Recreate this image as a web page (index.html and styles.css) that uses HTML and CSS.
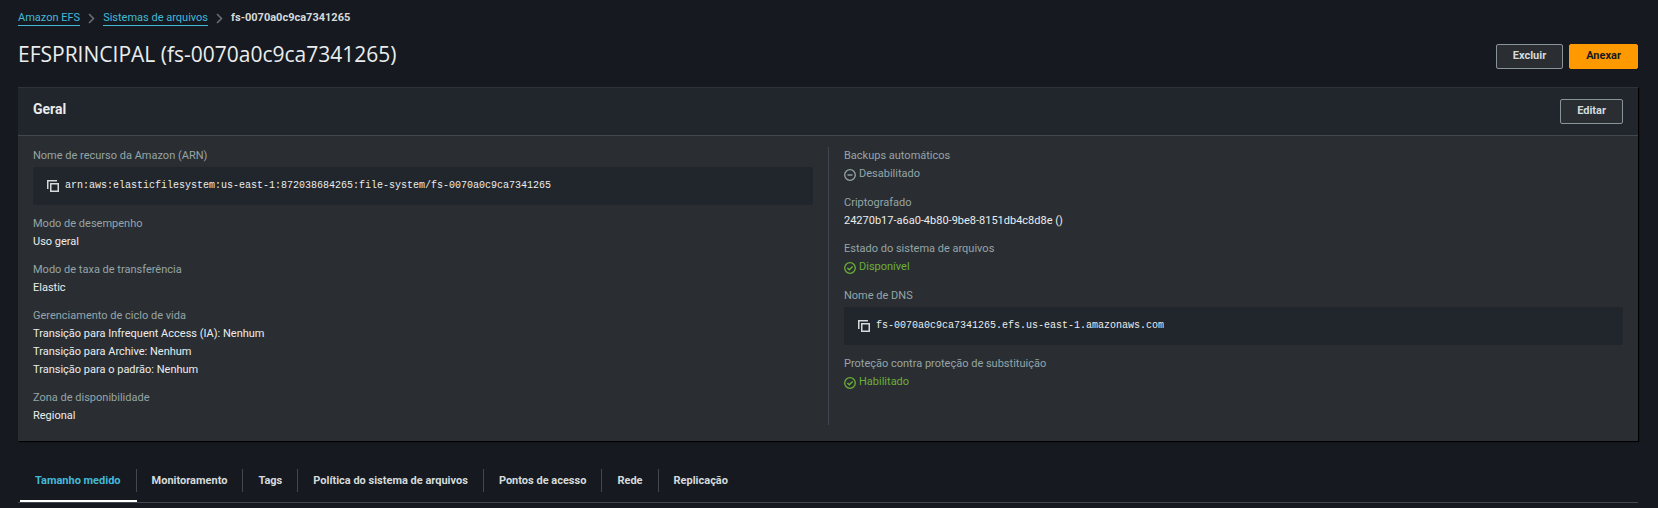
FILE: index.html
```html
<!DOCTYPE html>
<html lang="pt-BR">
<head>
<meta charset="utf-8">
<title>EFSPRINCIPAL (fs-0070a0c9ca7341265)</title>
<link rel="stylesheet" href="styles.css">
</head>
<body>
<svg class="sprite" aria-hidden="true">
  <symbol id="chevron" viewBox="0 0 7 11"><path d="M1 1l4.5 4.5L1 10" fill="none" stroke="currentColor" stroke-width="1.5"/></symbol>
  <symbol id="copy" viewBox="0 0 12 12"><path d="M.75 9V.75H10M3.75 3.75h7.5v7.5h-7.5z" fill="none" stroke="currentColor" stroke-width="1.5"/></symbol>
  <symbol id="check" viewBox="0 0 12 12"><circle cx="6" cy="6" r="5.3" fill="none" stroke="currentColor" stroke-width="1.3"/><path d="M3.4 6l1.9 1.8 3.3-3.4" fill="none" stroke="currentColor" stroke-width="1.4"/></symbol>
  <symbol id="minus" viewBox="0 0 12 12"><circle cx="6" cy="6" r="5.3" fill="none" stroke="currentColor" stroke-width="1.3"/><path d="M3.5 6h5" stroke="currentColor" stroke-width="1.4"/></symbol>
</svg>
<main class="page">
  <nav aria-label="Trilha">
    <ol class="crumbs">
      <li><a href="#efs">Amazon EFS</a></li>
      <li><svg class="chevron"><use href="#chevron"/></svg><a href="#sistemas">Sistemas de arquivos</a></li>
      <li><svg class="chevron"><use href="#chevron"/></svg><span class="current">fs-0070a0c9ca7341265</span></li>
    </ol>
  </nav>

  <header class="title-bar">
    <h1>EFSPRINCIPAL (fs-0070a0c9ca7341265)</h1>
    <div class="actions">
      <button class="btn" type="button">Excluir</button>
      <button class="btn primary" type="button">Anexar</button>
    </div>
  </header>

  <section class="panel">
    <header class="panel-head">
      <h2>Geral</h2>
      <button class="btn" type="button">Editar</button>
    </header>
    <div class="panel-body">
      <dl class="column">
        <div>
          <dt>Nome de recurso da Amazon (ARN)</dt>
          <dd class="code"><button class="copy" type="button" aria-label="Copiar ARN"><svg class="icon"><use href="#copy"/></svg></button><code>arn:aws:elasticfilesystem:us-east-1:872038684265:file-system/fs-0070a0c9ca7341265</code></dd>
        </div>
        <div><dt>Modo de desempenho</dt><dd>Uso geral</dd></div>
        <div><dt>Modo de taxa de transferência</dt><dd>Elastic</dd></div>
        <div>
          <dt>Gerenciamento de ciclo de vida</dt>
          <dd>Transição para Infrequent Access (IA): Nenhum</dd>
          <dd>Transição para Archive: Nenhum</dd>
          <dd>Transição para o padrão: Nenhum</dd>
        </div>
        <div><dt>Zona de disponibilidade</dt><dd>Regional</dd></div>
      </dl>
      <dl class="column">
        <div><dt>Backups automáticos</dt><dd class="status off"><svg class="icon"><use href="#minus"/></svg>Desabilitado</dd></div>
        <div><dt>Criptografado</dt><dd>24270b17-a6a0-4b80-9be8-8151db4c8d8e ()</dd></div>
        <div><dt>Estado do sistema de arquivos</dt><dd class="status ok"><svg class="icon"><use href="#check"/></svg>Disponível</dd></div>
        <div>
          <dt>Nome de DNS</dt>
          <dd class="code"><button class="copy" type="button" aria-label="Copiar nome de DNS"><svg class="icon"><use href="#copy"/></svg></button><code>fs-0070a0c9ca7341265.efs.us-east-1.amazonaws.com</code></dd>
        </div>
        <div><dt>Proteção contra proteção de substituição</dt><dd class="status ok"><svg class="icon"><use href="#check"/></svg>Habilitado</dd></div>
      </dl>
    </div>
  </section>

  <div class="tabs" role="tablist">
    <button class="tab" type="button" role="tab" aria-selected="true"><span>Tamanho medido</span></button>
    <button class="tab" type="button" role="tab" aria-selected="false"><span>Monitoramento</span></button>
    <button class="tab" type="button" role="tab" aria-selected="false"><span>Tags</span></button>
    <button class="tab" type="button" role="tab" aria-selected="false"><span>Política do sistema de arquivos</span></button>
    <button class="tab" type="button" role="tab" aria-selected="false"><span>Pontos de acesso</span></button>
    <button class="tab" type="button" role="tab" aria-selected="false"><span>Rede</span></button>
    <button class="tab" type="button" role="tab" aria-selected="false"><span>Replicação</span></button>
  </div>
</main>
</body>
</html>
```
FILE: styles.css
```css
* { box-sizing: border-box; }

body {
  margin: 0;
  background: #16191f;
  color: #eaeded;
  font: 11px/18px Roboto, "Noto Sans", sans-serif;
}

h1, h2, ol, dl, dt, dd { margin: 0; padding: 0; }

button { font: inherit; color: inherit; cursor: pointer; }

.sprite { display: none; }

.page { padding: 9px 20px 0 18px; }

.crumbs {
  display: flex;
  list-style: none;
}

.crumbs li { display: flex; align-items: center; }

.crumbs a {
  color: #44b9d6;
  line-height: 15px;
  text-decoration: none;
  border-bottom: 1px solid #44b9d6;
}

.chevron {
  width: 7px;
  height: 11px;
  margin: 0 8px;
  color: #687078;
}

.current { font-weight: 700; color: #d5dbdb; }

.title-bar {
  display: flex;
  justify-content: space-between;
  align-items: flex-end;
  margin-top: 12px;
}

h1 { font: 400 21px/30px "Open Sans", "Noto Sans", sans-serif; }

.actions { display: flex; gap: 6px; }

.btn {
  height: 25px;
  padding: 0 16px 2px;
  border: 1px solid #879596;
  border-radius: 2px;
  background: #2a2e33;
  color: #d5dbdb;
  font-weight: 700;
}

.btn.primary {
  border-color: #ff9900;
  background: #ff9900;
  color: #16191f;
}

.panel {
  margin-top: 18px;
  border-top: 1px solid #2f3338;
  background: #2a2e33;
  box-shadow: 1px 1px 1px #000000;
}

.panel-head {
  display: flex;
  justify-content: space-between;
  align-items: flex-start;
  padding: 11px 15px;
  border-bottom: 1px solid #414750;
  background: #21252c;
}

h2 { font-size: 14px; line-height: 20px; font-weight: 700; }

.panel-body {
  display: grid;
  grid-template-columns: 1fr 1fr;
  padding: 11px 0 16px;
}

.column {
  display: flex;
  flex-direction: column;
  gap: 10px;
  padding: 0 15px;
}

.column + .column { border-left: 1px solid #414750; }

dt { color: #95a5a6; }

.code {
  display: flex;
  align-items: center;
  gap: 6px;
  margin-top: 2px;
  padding: 10px 14px;
  border-radius: 2px;
  background: #21252c;
}

.copy {
  display: flex;
  padding: 0;
  border: 0;
  background: none;
  color: #d5dbdb;
}

code { font: 10px/18px "Liberation Mono", monospace; }

.icon { width: 12px; height: 12px; flex: none; }

.status { display: flex; align-items: flex-start; gap: 3px; height: 19px; }
.status .icon { margin-top: 4px; }
.off { color: #95a5a6; }
.ok { color: #6aaf35; }

.tabs {
  display: flex;
  margin-top: 28px;
  padding-left: 2px;
  border-bottom: 1px solid #414750;
}

.tab {
  padding: 0 0 8px;
  border: 0;
  border-bottom: 2px solid transparent;
  background: none;
  color: #d5dbdb;
  font-weight: 700;
}

.tab span {
  display: block;
  padding: 0 15px;
  border-right: 1px solid #414750;
  line-height: 23px;
}

.tab:last-child span { border-right: 0; }

.tab[aria-selected="true"] { color: #44b9d6; border-bottom-color: #ffffff; }
```
